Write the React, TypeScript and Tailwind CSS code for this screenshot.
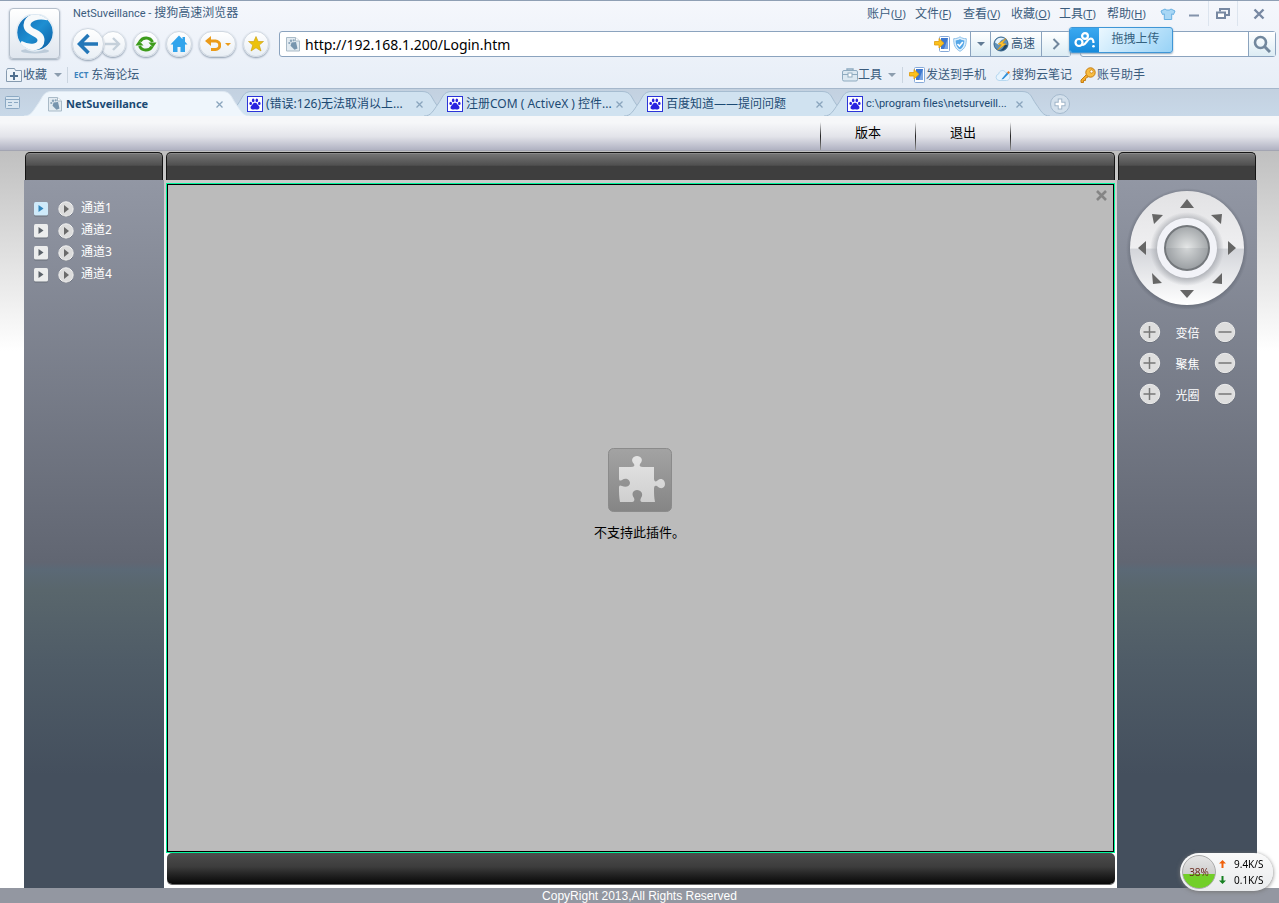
import React, { useState } from "react";
import clsx from "clsx";

const menus = [
  { label: "账户", hotkey: "U" },
  { label: "文件", hotkey: "F" },
  { label: "查看", hotkey: "V" },
  { label: "收藏", hotkey: "O" },
  { label: "工具", hotkey: "T" },
  { label: "帮助", hotkey: "H" },
];

const tabs = [
  { title: "NetSuveillance", page: true, font: "text-[11px] font-bold" },
  { title: "(错误:126)无法取消以上...", font: "text-xs" },
  { title: "注册COM ( ActiveX ) 控件...", font: "text-xs" },
  { title: "百度知道——提问问题", font: "text-xs" },
  { title: "c:\\program files\\netsurveill...", font: "text-[11px] font-['Roboto',sans-serif]" },
];

const channels = ["通道1", "通道2", "通道3", "通道4"];
const lensControls = ["变倍", "聚焦", "光圈"];
const directions = ["左上", "上", "右上", "左", "自动", "右", "左下", "下", "右下"];

const PageIcon = () => (
  <svg className="size-4 shrink-0" viewBox="0 0 16 16">
    <path d="M1.500 1.500h9L14.500 5v10h-13z" fill="#e3ebf1" stroke="#a9bac7" />
    <path d="M10.500 1.500V5h4" fill="#fff" stroke="#a9bac7" />
    <path d="M6.500 6.500l4.500-.5 1.500 6.500-3 1.200-4-4z" fill="#7795ae" />
    <circle cx="4.300" cy="7" r="1.100" fill="#8ba5ba" />
    <circle cx="6" cy="4.800" r="1.200" fill="#8ba5ba" />
    <circle cx="8.700" cy="4.300" r="1.100" fill="#8ba5ba" />
  </svg>
);

const PawIcon = () => (
  <svg className="size-4 shrink-0" viewBox="0 0 16 16">
    <rect x=".5" y=".5" width="15" height="15" fill="#fff" stroke="#2b35d8" />
    <g fill="#2a22e0">
      <ellipse cx="3.700" cy="7.400" rx="1.300" ry="1.700" />
      <ellipse cx="6.200" cy="4.400" rx="1.300" ry="1.800" />
      <ellipse cx="9.800" cy="4.400" rx="1.300" ry="1.800" />
      <ellipse cx="12.300" cy="7.400" rx="1.300" ry="1.700" />
      <path d="M8 6.800c2 0 2.200 1.900 3.600 3 1.600 1.400.8 3.700-1 3.700-1 0-1.600-.3-2.600-.3s-1.600.3-2.600.3c-1.800 0-2.600-2.300-1-3.700C5.800 8.700 6 6.800 8 6.800z" />
    </g>
  </svg>
);

const PhoneIcon = () => (
  <svg className="size-4 shrink-0" viewBox="0 0 16 16">
    <rect x="5.500" y=".5" width="10" height="15" rx="1" fill="#fff" stroke="#86a9d8" />
    <rect x="7" y="2" width="7" height="11" fill="#3f78cf" />
    <path d="M14 2v11h-4z" fill="#7ba6e4" />
    <path d="M.5 5.500H5v-3l5 4.800-5 4.700V9H.5z" fill="#fbc11c" stroke="#e09a0c" strokeWidth=".8" />
  </svg>
);

const Caret = ({ className }: { className?: string }) => (
  <svg className={clsx("h-1 w-2 shrink-0", className)} viewBox="0 0 8 4">
    <path d="M0 0h8L4 4z" fill="currentColor" />
  </svg>
);

const NavButton = ({
  label,
  className,
  children,
}: {
  label: string;
  className?: string;
  children: React.ReactNode;
}) => (
  <button
    aria-label={label}
    className={clsx(
      "flex shrink-0 items-center justify-center rounded-full border border-[#d0d8e1] bg-linear-to-b from-white to-[#e9eff5] shadow-[0_1px_2px_#8c9bad]",
      className
    )}
  >
    {children}
  </button>
);

const TitleRow = () => (
  <div className="flex h-[25px] items-center pl-[5px] text-[#3b5c7d]">
    <h1 className="flex-1 text-xs">
      <span className="font-['Roboto',sans-serif] text-[11px]">NetSuveillance - </span>搜狗高速浏览器
    </h1>
    <nav className="flex gap-2">
      {menus.map((menu) => (
        <button key={menu.hotkey} className="w-10 whitespace-nowrap text-left text-xs">
          {menu.label}
          <span className="text-[11px]">
            (<u>{menu.hotkey}</u>)
          </span>
        </button>
      ))}
    </nav>
    <button aria-label="皮肤" className="ml-[13px]">
      <svg className="h-3 w-4" viewBox="0 0 16 12">
        <path d="M5 1C6 2.500 10 2.500 11 1l4 2-1.500 3.500-1.800-.6V11.500H4.300V5.900l-1.800.6L1 3z" fill="#a9d7f5" stroke="#68b0e2" />
      </svg>
    </button>
    <button aria-label="最小化" className="ml-3">
      <svg className="h-3 w-3" viewBox="0 0 12 12">
        <path d="M1 7.500h10" stroke="#8393ab" strokeWidth="2" />
      </svg>
    </button>
    <div className="mx-2 flex h-full items-center border-x border-[#dce4ee] px-[6px]">
      <button aria-label="还原">
        <svg className="h-3 w-4" viewBox="0 0 16 12">
          <path d="M5 3.500V1h9v6h-3.500" fill="none" stroke="#7788a2" strokeWidth="2" />
          <rect x="2" y="4.500" width="8" height="5.500" fill="#fff" stroke="#7788a2" strokeWidth="2" />
        </svg>
      </button>
    </div>
    <button aria-label="关闭" className="mr-[14px] ml-[7px]">
      <svg className="size-3" viewBox="0 0 12 12">
        <path d="M1.500 1.500l9 9M10.500 1.500l-9 9" stroke="#7788a2" strokeWidth="2.400" />
      </svg>
    </button>
  </div>
);

const NavRow = () => (
  <div className="flex h-9 items-center">
    <NavButton label="后退" className="z-10 ml-1 size-8">
      <svg className="size-[22px]" viewBox="0 0 22 22">
        <path d="M11.500 2L2.500 11l9 9M3.500 11H21" fill="none" stroke="#2377b8" strokeWidth="3.600" />
      </svg>
    </NavButton>
    <NavButton label="前进" className="-ml-1 size-[26px]">
      <svg className="size-4" viewBox="0 0 16 16">
        <path d="M8 2l6 6-6 6M13 8H0" fill="none" stroke="#c5d0da" strokeWidth="2.400" />
      </svg>
    </NavButton>
    <NavButton label="刷新" className="ml-[7px] size-[26px]">
      <svg className="size-[22px] shrink-0" viewBox="0 0 22 22">
        <path d="M5 8.500A7 7 0 0 1 17.500 9M17 13.500A7 7 0 0 1 4.500 13" fill="none" stroke="#3d9c1c" strokeWidth="3" />
        <path d="M13.500 9.500h8l-3.500 5zM8.500 12.500h-8l3.500-5z" fill="#3d9c1c" />
      </svg>
    </NavButton>
    <NavButton label="主页" className="ml-[7px] size-[26px]">
      <svg className="size-[18px]" viewBox="0 0 18 18">
        <path d="M9 .5L.5 9.500H3V17h4.500v-5h3v5H15V9.500h2.500L15 6.800V2h-2.500v2.200z" fill="#31a4ec" />
      </svg>
    </NavButton>
    <NavButton label="撤销关闭" className="ml-[7px] h-[26px] w-[37px] gap-1">
      <svg className="size-4" viewBox="0 0 16 16">
        <path d="M3 5h7.500a4 4 0 0 1 0 8.500H6" fill="none" stroke="#eb9b19" strokeWidth="3" />
        <path d="M0 5l6-5v10z" fill="#eb9b19" />
      </svg>
      <svg className="h-[3px] w-[6px]" viewBox="0 0 6 3">
        <path d="M0 0h6L3 3z" fill="#eb9b19" />
      </svg>
    </NavButton>
    <NavButton label="添加收藏" className="ml-[7px] size-[26px]">
      <svg className="size-4" viewBox="0 0 16 16">
        <path d="M8 .5l2.200 5h5.300l-4.200 3.600L13 15l-5-3.200L3 15l1.700-5.900L.5 5.500h5.300z" fill="#ecc20c" stroke="#c99a0a" strokeWidth=".6" />
      </svg>
    </NavButton>

    <div className="ml-[10px] flex h-[26px] flex-1 items-center rounded-[3px] border border-[#8ba3be] bg-white pl-[5px]">
      <PageIcon />
      <input
        aria-label="地址"
        defaultValue="http://192.168.1.200/Login.htm"
        className="min-w-0 flex-1 bg-transparent pt-px pl-1 text-sm text-black outline-none"
      />
      <PhoneIcon />
      <svg className="mx-[2px] size-4" viewBox="0 0 16 16">
        <path d="M8 .8c2 1.500 4 1.900 6.300 1.900 0 6-1 9.800-6.300 12.600C2.700 12.500 1.700 8.700 1.700 2.700 4 2.700 6 2.300 8 .8z" fill="#dff0fc" stroke="#8cc0ea" />
        <path d="M8 3c1.500 1 2.800 1.300 4.400 1.400C12.200 9 11 11.500 8 13.300 5 11.500 3.800 9 3.600 4.400 5.200 4.300 6.500 4 8 3z" fill="#56a7e8" />
        <path d="M5.500 8l2 2 3.300-4" fill="none" stroke="#fff" strokeWidth="1.600" />
      </svg>
      <button aria-label="历史地址" className="flex h-full w-5 items-center justify-center border-l border-[#8ba3be] bg-linear-to-b from-white to-[#dcecf4] text-[#617b94]">
        <Caret />
      </button>
      <button className="flex h-full w-[51px] items-center gap-[2px] border-l border-[#8ba3be] bg-linear-to-b from-white to-[#dcecf4] pl-[2px] text-xs text-[#345676]">
        <svg className="size-4" viewBox="0 0 16 16">
          <circle cx="8" cy="8" r="7" fill="#5f92b8" stroke="#37648a" />
          <path d="M2 6.500C3 2 8 .5 12 3 8 3 6 6 6 9z" fill="#e6f2fa" />
          <path d="M14.500 9c-1 4-4 6-8 5.500 3-1 4-3 5-5.500z" fill="#1f4666" />
          <path d="M13 2.500L5 8l3.500.8L4.500 14l8.500-6L9.700 7.200z" fill="#ffc52e" stroke="#d98c0c" strokeWidth=".5" />
        </svg>
        高速
      </button>
      <button aria-label="更多" className="flex h-full w-[29px] items-center justify-center border-l border-[#8ba3be] bg-linear-to-b from-white to-[#dcecf4]">
        <svg className="h-3 w-2" viewBox="0 0 8 12">
          <path d="M1.500 1L6.500 6l-5 5" fill="none" stroke="#71879d" strokeWidth="2" />
        </svg>
      </button>
    </div>

    {/* search box with the floating drag-to-upload pill over its left end */}
    <div className="relative mr-[3px] ml-[9px] flex h-[26px] w-[196px] items-center rounded-[3px] border border-[#8ba3be] bg-white">
      <input aria-label="搜索" className="h-full min-w-0 flex-1 bg-transparent px-2 text-xs outline-none" />
      <button aria-label="搜索" className="flex h-full w-[27px] items-center justify-center border-l border-[#8ba3be] bg-linear-to-b from-white to-[#dcecf4]">
        <svg className="size-[18px]" viewBox="0 0 18 18">
          <circle cx="7.500" cy="7.500" r="5.500" fill="none" stroke="#71879d" strokeWidth="2.600" />
          <path d="M11.500 11.500L17 17" stroke="#71879d" strokeWidth="3" />
        </svg>
      </button>
      <button className="absolute -top-[5px] -left-3 flex h-[26px] w-[104px] items-stretch overflow-hidden rounded-[3px] border border-[#3f96d6] bg-linear-135 from-[#eef9ff] from-20% to-[#97d2f6] text-xs text-[#33617f] shadow-[0_1px_2px_#8fa6bb]">
        <span className="flex w-[29px] items-center justify-center bg-linear-to-b from-[#3ba9f0] to-[#168bdc]">
          <svg className="h-4 w-[22px]" viewBox="0 0 22 16">
            <g fill="none" stroke="#fff" strokeWidth="2.200">
              <circle cx="11" cy="4" r="2.900" />
              <circle cx="5" cy="10.500" r="3.500" />
              <path d="M8 12.500c4 2 4.500-5.500 8.500-6 2.500 0 3 2 3 4.500" />
            </g>
            <circle cx="19.500" cy="14.300" r="1.300" fill="#fff" />
          </svg>
        </span>
        <span className="flex-1 self-center pb-[3px] text-center">拖拽上传</span>
      </button>
    </div>
  </div>
);

const BookmarkRow = () => (
  <div className="flex h-[26px] items-center pr-[134px] pl-[6px] text-xs text-[#3b5c7d]">
    <button className="flex items-center gap-px">
      <svg className="h-4 w-4" viewBox="0 0 16 16">
        <path d="M.5 14.500h15v-11h-6l-1-2h-7l-1 2z" fill="#eef4f9" stroke="#869bb0" />
        <path d="M8 5v8M4 9h8" stroke="#4f6f8e" strokeWidth="2" />
      </svg>
      收藏
      <Caret className="ml-[6px] text-[#8c9dae]" />
    </button>
    <a href="#forum" className="ml-[5px] flex items-center border-l border-[#cbd5e0] pl-[6px]">
      <b className="mr-[3px] text-[8px] text-[#3c83bd]">ECT</b>
      东海论坛
    </a>
    <button className="ml-auto flex items-center">
      <svg className="h-4 w-4" viewBox="0 0 16 16">
        <path d="M5 4V2h6v2" fill="none" stroke="#8fabc0" strokeWidth="1.400" />
        <rect x=".5" y="3.500" width="15" height="10.500" rx="1.500" fill="#dce8f1" stroke="#8fabc0" />
        <path d="M1 7.500h14" stroke="#8fabc0" />
        <rect x="6" y="6" width="4" height="4" fill="#fff" stroke="#8fabc0" />
      </svg>
      工具
      <Caret className="ml-[6px] text-[#8c9dae]" />
    </button>
    <button className="ml-[6px] flex items-center gap-px border-l border-[#cbd5e0] pl-[6px]">
      <PhoneIcon />
      发送到手机
    </button>
    <button className="ml-[9px] flex items-center gap-px">
      <svg className="size-4" viewBox="0 0 16 16">
        <path d="M4 13.500a3.300 3.300 0 0 1-.3-6.500C4 3.500 9 2 10.500 5.500c3-.5 5 1.500 4.500 4.500-.3 2-1.500 3.500-3.500 3.500z" fill="#e7f4fe" stroke="#b7d8f0" />
        <path d="M7 11.500l5-6 1.500 1.500-5 5-2 .5z" fill="#2d8fd8" />
        <path d="M12 5.500L13.500 4 15 5.500 13.500 7z" fill="#e8771c" />
      </svg>
      搜狗云笔记
    </button>
    <button className="ml-2 flex items-center gap-px">
      <svg className="size-4" viewBox="0 0 16 16">
        <path d="M6.500 7.500L1 13v2.500h2.500v-2h2v-2L8.500 9.500" fill="#f3ae2d" stroke="#c67c10" />
        <circle cx="10.500" cy="5.500" r="4.700" fill="#f8bd42" stroke="#c67c10" />
        <circle cx="11.500" cy="4.500" r="1.600" fill="#fff" stroke="#c67c10" strokeWidth=".8" />
      </svg>
      账号助手
    </button>
  </div>
);

const TabStrip = () => {
  const [active, setActive] = useState(0);

  return (
    <div className="flex h-7 items-end border-t border-[#a5b7cb] bg-linear-to-b from-[#c3d1e0] to-[#c8d8e8]">
      <button aria-label="标签列表" className="mb-[7px] ml-[5px] w-8">
        <svg className="h-[13px] w-[15px]" viewBox="0 0 15 13">
          <rect x=".5" y=".5" width="14" height="12" rx="1" fill="#d9e6f1" stroke="#8ca9c3" />
          <path d="M1 3.500h13M3 6.500h4M3 9.500h4M9 6.500h4" stroke="#8ca9c3" />
        </svg>
      </button>
      {tabs.map((tab, index) => (
        <div
          key={tab.title}
          className={clsx("relative flex h-[25px] w-[200px] items-center pt-px pl-[10px]", index === active && "z-10")}
        >
          <svg className="absolute top-0 -left-[13px] h-[25px] w-[226px]" viewBox="0 0 226 25">
            <path
              d="M0 25C7 25 9 20 14 13S19 .5 28 .5H198C207 .5 207 6 212 13S219 25 226 25"
              fill={index === active ? "#eff6fc" : "#d0e2f0"}
              stroke={index === active ? "#dfe9f2" : "#a6bdd1"}
            />
          </svg>
          <button
            onClick={() => setActive(index)}
            className="relative flex min-w-0 flex-1 items-center gap-[3px] text-left text-[#1c4a73]"
          >
            {tab.page ? <PageIcon /> : <PawIcon />}
            <span className={clsx("whitespace-nowrap", tab.font)}>{tab.title}</span>
          </button>
          <button aria-label="关闭标签" className="relative mr-[14px]">
            <svg className="size-[7px]" viewBox="0 0 7 7">
              <path d="M.5.5l6 6M6.500.5l-6 6" stroke="#8aa5bd" strokeWidth="1.300" />
            </svg>
          </button>
        </div>
      ))}
      <button aria-label="新建标签" className="mb-px ml-3">
        <svg className="size-[22px]" viewBox="0 0 22 22">
          <circle cx="11" cy="11" r="9.500" fill="#d3e0ec" stroke="#a5bace" />
          <path d="M11 5.500v11M5.500 11h11" stroke="#9fb4c8" strokeWidth="4.500" />
          <path d="M11 6.500v9M6.500 11h9" stroke="#fff" strokeWidth="2.500" />
        </svg>
      </button>
    </div>
  );
};

const BrowserHeader = () => (
  <header>
    <div className="border-t border-[#8f9fb4] bg-linear-to-b from-[#f5f7fc] to-[#e7eef7]">
      <div className="flex">
        <div className="w-[68px] shrink-0 pt-[7px] pl-[9px]">
          <div className="flex h-[51px] w-[51px] items-center justify-center rounded-[4px] border border-[#b5bfcb] bg-linear-to-b from-white to-[#dfe6ee] shadow-[0_1px_2px_#9aa8b8]">
            <svg className="size-10" viewBox="0 0 40 40">
              <defs>
                <linearGradient id="logo" x1="0" y1="0" x2="1" y2="1">
                  <stop offset="0" stopColor="#0d64ae" />
                  <stop offset=".5" stopColor="#1e8fd2" />
                  <stop offset="1" stopColor="#0c5ba0" />
                </linearGradient>
                <clipPath id="ball">
                  <circle cx="20" cy="18.500" r="18" />
                </clipPath>
              </defs>
              <ellipse cx="20" cy="37" rx="14" ry="2.500" fill="#bccbd9" />
              <circle cx="20" cy="18.500" r="18" fill="url(#logo)" />
              <path
                d="M33 3C23 0 12 4 12 11c0 8 14 7 14 15 0 7-10 10-21 4"
                fill="none"
                stroke="#f6f9fb"
                strokeWidth="7"
                clipPath="url(#ball)"
              />
              <circle cx="20" cy="18.500" r="18.500" fill="none" stroke="#e3ecf4" strokeWidth="1.500" />
            </svg>
          </div>
        </div>
        <div className="min-w-0 flex-1">
          <TitleRow />
          <NavRow />
        </div>
      </div>
      <BookmarkRow />
    </div>
    <TabStrip />
  </header>
);

const PanelHead = () => (
  <div className="h-7 shrink-0 rounded-t-[5px] border border-b-0 border-[#151515] bg-linear-to-b from-[#777] via-[#505050] via-45% to-[#3e3e3e] to-50% inset-shadow-[0_1px_0_#8a8a8a]" />
);

const PlayGlyph = ({ selected }: { selected: boolean }) => (
  <svg className="size-4" viewBox="0 0 16 16">
    <rect x="1" y="1.500" width="14" height="14" rx="1.500" fill="#686e79" />
    <rect x="1" y="1" width="14" height="13.500" rx="1.500" fill={selected ? "#cfeafa" : "#eceded"} />
    <path d="M5.500 4l5 3.500-5 3.500z" fill={selected ? "#3186bd" : "#5b6269"} />
  </svg>
);

const sideFill =
  "bg-[linear-gradient(#9297a4_0%,#616672_54%,#5b6976_55%,#59666c_58%,#4f5c67_68%,#444f5d_84%)]";

const ChannelPanel = () => {
  const [selected, setSelected] = useState(0);

  return (
    <aside className="flex w-[140px] shrink-0 flex-col">
      <div className="px-px">
        <PanelHead />
      </div>
      <ul className={clsx("flex-1 pt-[18px] pl-[9px]", sideFill)}>
        {channels.map((channel, index) => (
          <li key={channel} className="flex h-[22px] items-center">
            <button aria-label="选择通道" onClick={() => setSelected(index)}>
              <PlayGlyph selected={index === selected} />
            </button>
            <button aria-label="播放" className="mr-[7px] ml-[9px]">
              <svg className="size-4" viewBox="0 0 16 16">
                <circle cx="8" cy="8.500" r="7.500" fill="#555b65" />
                <circle cx="8" cy="8" r="7.200" fill="#dcdcdc" stroke="#f3f3f3" />
                <path d="M6 4l5 4-5 4z" fill="#6a6a6a" />
              </svg>
            </button>
            <span className="pb-[2px] text-xs text-white">{channel}</span>
          </li>
        ))}
      </ul>
    </aside>
  );
};

const VideoPanel = () => (
  <main className="flex min-w-0 flex-1 flex-col">
    <PanelHead />
    <div className="relative mt-[3px] flex flex-1 flex-col border border-[#00f59b]">
      <div className="flex flex-1 flex-col items-center justify-center gap-3 border border-black bg-[#bbb] pr-[2px] pb-12">
        <svg className="size-16" viewBox="0 0 64 64">
          <defs>
            <linearGradient id="plugin" x1="0" y1="0" x2="0" y2="1">
              <stop offset="0" stopColor="#a3a3a3" />
              <stop offset="1" stopColor="#858585" />
            </linearGradient>
            <linearGradient id="piece" x1="0" y1="0" x2="0" y2="1">
              <stop offset="0" stopColor="#e4e4e4" />
              <stop offset="1" stopColor="#cfcfcf" />
            </linearGradient>
          </defs>
          <rect x=".5" y=".5" width="63" height="63" rx="5" fill="url(#plugin)" stroke="#8b8b8b" />
          <path
            d="M11 19h12c3 0 4-1 3-3-4-4-1-8 3-8s7 4 3 8c-1 2 0 3 3 3h11v11c0 3 1 4 3 3 4-4 8-1 8 3s-4 6-8 2c-2-1-3 0-3 3 0 4 0 8 1 13H35c-3 0-3-2-2-4 3-4 0-8-4-8s-6 4-3 8c1 2 0 4-2 4H12c-1-5-1-10-1-14 0-3 1-3 3-2 4 2 8 0 8-3s-4-6-8-3c-2 1-3 1-3-2z"
            fill="url(#piece)"
          />
        </svg>
        <p className="text-[13px] leading-4 text-black">不支持此插件。</p>
      </div>
      <button aria-label="关闭" className="absolute top-[6px] right-[7px]">
        <svg className="size-[11px]" viewBox="0 0 11 11">
          <path d="M1 1l9 9M10 1l-9 9" stroke="#858585" strokeWidth="2.600" />
        </svg>
      </button>
    </div>
    <div className="mb-1 ml-px h-[31px] shrink-0 rounded-[5px] bg-linear-to-b from-[#4d4d4d] via-[#3c3c3c] via-45% to-[#080808] shadow-[0_1px_0_#666]" />
  </main>
);

const PtzWheel = () => (
  <div className="relative mx-auto size-[122px]">
    <svg className="size-full" viewBox="0 0 122 122">
      <defs>
        <linearGradient id="wheel" x1="0" y1="0" x2="0" y2="1">
          <stop offset="0" stopColor="#e2e2e4" />
          <stop offset=".5" stopColor="#efeff1" />
          <stop offset=".51" stopColor="#d3d5da" />
          <stop offset="1" stopColor="#fff" />
        </linearGradient>
        <radialGradient id="knob">
          <stop offset="0" stopColor="#e6e8e8" />
          <stop offset="1" stopColor="#a2a6a9" />
        </radialGradient>
        <radialGradient id="halo">
          <stop offset=".88" stopColor="#4c525e" stopOpacity=".6" />
          <stop offset="1" stopColor="#4c525e" stopOpacity="0" />
        </radialGradient>
        <radialGradient id="ringShade">
          <stop offset=".75" stopColor="#a9acb2" />
          <stop offset="1" stopColor="#a9acb2" stopOpacity="0" />
        </radialGradient>
      </defs>
      <circle cx="61" cy="62" r="61" fill="url(#halo)" />
      <circle cx="61" cy="61" r="57" fill="url(#wheel)" />
      <circle cx="61" cy="62" r="37" fill="url(#ringShade)" />
      <circle cx="61" cy="61" r="30" fill="#f2f3f8" />
      <circle cx="61" cy="61" r="22" fill="url(#knob)" stroke="#74787c" strokeWidth="2" />
      <path d="M40 61h42a21 21 0 0 1-42 0z" fill="#6c7277" opacity=".14" />
      <g fill="#666">
        <path d="M61 12l7 9H54zM61 111l7-8H54z" />
        <path d="M12 61l8-7v14zM110 61l-8-7v14z" />
        <path d="M26 27l11 1-9 9zM96 27l-11 1 10 9zM26 86l10 10-9 1zM96 86L86 96l10 1z" />
      </g>
    </svg>
    <div className="absolute inset-0 grid grid-cols-3">
      {directions.map((direction) => (
        <button key={direction} aria-label={direction} />
      ))}
    </div>
  </div>
);

const RoundButton = ({ label, plus }: { label: string; plus?: boolean }) => (
  <button aria-label={label}>
    <svg className="size-[22px]" viewBox="0 0 22 22">
      <circle cx="11" cy="11.700" r="10" fill="#5c626d" />
      <circle cx="11" cy="11" r="9.700" fill="#dedede" stroke="#ececec" />
      <path d={plus ? "M10.500 5v12M4.500 11h12" : "M4.500 11h13"} stroke="#777" strokeWidth="1.500" />
    </svg>
  </button>
);

const ControlPanel = () => (
  <aside className="flex w-[140px] shrink-0 flex-col">
    <div className="px-px">
      <PanelHead />
    </div>
    <div className={clsx("flex-1 pt-[7px]", sideFill)}>
      <PtzWheel />
      <div className="mt-[7px]">
        {lensControls.map((control) => (
          <div key={control} className="flex h-[31px] items-center justify-between pr-[21px] pl-[22px] text-xs text-white">
            <RoundButton label={control + "加"} plus />
            <span className="pt-1">{control}</span>
            <RoundButton label={control + "减"} />
          </div>
        ))}
      </div>
    </div>
  </aside>
);

const SpeedWidget = () => (
  <div className="fixed right-[6px] bottom-3 z-20 flex h-[38px] w-[93px] items-center rounded-full bg-linear-to-b from-[#fafafa] to-[#e9ebed] pl-[2px] text-[10px] text-black shadow-[0_1px_4px_#777]">
    <div className="flex size-[34px] shrink-0 items-center justify-center rounded-full border border-[#aaa] bg-linear-to-b from-[#e5e5e5] from-0% via-[#cfcfcf] via-55% to-[#72cf28] to-56% text-[#6b2b20]">
      38%
    </div>
    <div className="ml-[3px] flex flex-col gap-px">
      {["9.4K/S", "0.1K/S"].map((speed, index) => (
        <div key={speed} className="flex h-[15px] items-center gap-2">
          <svg className="h-2 w-[7px]" viewBox="0 0 7 8">
            {index === 0 ? (
              <path d="M3.500 0L7 3.500H4.500V8h-2V3.500H0z" fill="#f0610c" />
            ) : (
              <path d="M3.500 8L7 4.500H4.500V0h-2v4.500H0z" fill="#178022" />
            )}
          </svg>
          {speed}
        </div>
      ))}
    </div>
  </div>
);

const ToolbarDivider = () => <span className="h-7 w-px bg-linear-to-b from-transparent via-[#222] to-[#999]" />;

const App = () => {
  return (
    <div className="flex min-h-screen flex-col bg-white font-['Noto_Sans','Noto_Sans_CJK_SC',sans-serif]">
      <BrowserHeader />

      {/* Page toolbar */}
      <div className="flex h-[35px] shrink-0 items-end justify-end border-b border-[#a3a5b2] bg-linear-to-b from-[#f6f7f9] from-20% via-[#e3e4ea] via-60% to-[#b0b2c2] pr-[268px] text-[13px] text-black">
        <ToolbarDivider />
        {["版本", "退出"].map((item) => (
          <React.Fragment key={item}>
            <button className="h-7 w-[94px] pb-[6px]">{item}</button>
            <ToolbarDivider />
          </React.Fragment>
        ))}
      </div>

      <div className="flex flex-1 gap-[2px] bg-linear-to-b from-[#c0c0c0] from-0% to-white to-[200px] pt-px pr-[22px] pl-6">
        <ChannelPanel />
        <VideoPanel />
        <ControlPanel />
      </div>

      <footer className="h-[15px] bg-[#9397a1] text-center font-['Liberation_Sans',sans-serif] text-xs leading-4 text-white">
        CopyRight 2013,All Rights Reserved
      </footer>

      <SpeedWidget />
    </div>
  );
};

export default App;
